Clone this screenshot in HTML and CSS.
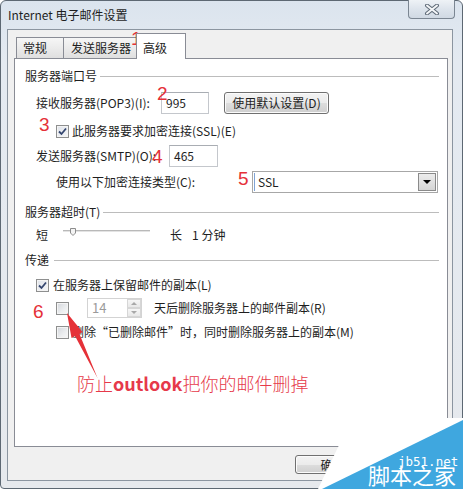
FILE: index.html
```html
<!DOCTYPE html>
<html lang="zh-CN">
<head>
  <meta charset="UTF-8" />
  <title>Internet 电子邮件设置</title>
  <link rel="stylesheet" href="styles.css">
</head>
<body>
  <div class="window">
    <div class="titlebar">
      <span class="title">Internet 电子邮件设置</span>
      <span class="close">
        <svg width="16" height="11" viewBox="0 0 16 11">
          <path d="M3 1.5 L13 9.5 M13 1.5 L3 9.5" stroke="#5f6b78" stroke-width="4" stroke-linecap="round"/>
          <path d="M3 1.5 L13 9.5 M13 1.5 L3 9.5" stroke="#f4f6f8" stroke-width="2" stroke-linecap="round"/>
        </svg>
      </span>
    </div>

    <div class="client">
      <div class="tabs">
        <span class="tab tab-general">常规</span>
        <span class="tab tab-send">发送服务器</span>
        <span class="tab tab-adv active">高级</span>
      </div>

      <div class="panel">
        <div class="group-title">服务器端口号</div>

        <div class="row row-pop">
          <span class="label lbl-pop">接收服务器(POP3)(I):</span>
          <span class="text-input in-pop">995</span>
          <span class="win-btn btn-default">使用默认设置(D)</span>
        </div>

        <div class="row row-check row-ssl">
          <span class="check checked">
            <svg width="11" height="11" viewBox="0 0 11 11"><path d="M2 5.5 L4.5 8 L9 2.5" fill="none" stroke="#34466f" stroke-width="1.8"/></svg>
          </span>
          <span>此服务器要求加密连接(SSL)(E)</span>
        </div>

        <div class="row row-smtp">
          <span class="label lbl-smtp">发送服务器(SMTP)(O):</span>
          <span class="text-input in-smtp">465</span>
        </div>

        <div class="row row-enc">
          <span class="label lbl-enc">使用以下加密连接类型(C):</span>
          <span class="select">
            <span class="select-text">SSL</span>
            <span class="select-arrow"></span>
          </span>
        </div>

        <div class="group-title gt-timeout">服务器超时(T)</div>

        <div class="row row-slider">
          <span>短</span>
          <svg class="slider" width="87" height="16" viewBox="0 0 87 16">
            <rect x="0" y="3" width="87" height="2" fill="#e3e3e3"/>
            <rect x="0" y="3" width="87" height="1" fill="#b9b9b9"/>
            <path d="M7.5 1.5 H12.5 V6 L10 8.5 L7.5 6 Z" fill="#f4f4f4" stroke="#8d8d8d"/>
          </svg>
          <span class="long">长</span>
          <span>1 分钟</span>
        </div>

        <div class="group-title gt-deliver">传递</div>

        <div class="row row-keep">
          <span class="check checked">
            <svg width="11" height="11" viewBox="0 0 11 11"><path d="M2 5.5 L4.5 8 L9 2.5" fill="none" stroke="#34466f" stroke-width="1.8"/></svg>
          </span>
          <span>在服务器上保留邮件的副本(L)</span>
        </div>

        <div class="row row-check row-days">
          <span class="check"></span>
          <span class="spin">
            <span class="spin-text">14</span>
            <span class="spin-btns">
              <span class="spin-up"></span>
              <span class="spin-down"></span>
            </span>
          </span>
          <span class="days-text">天后删除服务器上的邮件副本(R)</span>
        </div>

        <div class="row row-check row-del">
          <span class="check"></span>
          <span>删除“已删除邮件”时，同时删除服务器上的副本(M)</span>
        </div>
      </div>

      <div class="bottom">
        <span class="win-btn btn-ok">确定</span>
      </div>
    </div>
  </div>

  <!-- annotations drawn over the screenshot -->
  <span class="mark mark-1">1</span>
  <span class="mark mark-2">2</span>
  <span class="mark mark-3">3</span>
  <span class="mark mark-4">4</span>
  <span class="mark mark-5">5</span>
  <span class="mark mark-6">6</span>

  <svg class="arrow" width="463" height="489" viewBox="0 0 463 489">
    <polygon points="67,313 82.5,332 79.5,334 97.5,378 75,336 71.5,338" fill="#e53138"/>
  </svg>

  <div class="note">防止<b>outlook</b>把你的邮件删掉</div>

  <svg class="watermark" width="183" height="89" viewBox="0 0 183 89">
    <polygon points="38,89 72,18 183,18 183,89" fill="#ffffff"/>
    <polygon points="42,89 183,20 183,89" fill="#3fa7df"/>
    <text x="118" y="66" class="wm-url">jb51.net</text>
    <text x="88" y="84" class="wm-name">脚本之家</text>
  </svg>
</body>
</html>
```

FILE: styles.css
```css
* {
  box-sizing: border-box;
}

body {
  position: relative;
  margin: 0;
  width: 463px;
  height: 489px;
  overflow: hidden;
  font-family: "Noto Sans CJK SC", sans-serif;
  font-size: 12px;
  color: #1e1e1e;
  background: #fff;
}

.window {
  width: 463px;
  height: 489px;
  border: 1px solid #5d6873;
  border-radius: 6px 6px 4px 4px;
  background: linear-gradient(180deg, #dbe4ee 0, #e4eaf1 60px, #e6e9ed 100%);
}

.titlebar {
  display: flex;
  height: 28px;
  padding-left: 7px;
}

.title {
  margin-top: 6px;
  line-height: 16px;
}

.close {
  display: flex;
  align-items: center;
  justify-content: center;
  margin: -1px 7px 0 auto;
  width: 47px;
  height: 19px;
  border: 1px solid #7b8692;
  border-top: none;
  border-radius: 0 0 4px 4px;
  background: linear-gradient(180deg, #eef2f6 0, #dde4ec 50%, #d0d9e3 100%);
}

.client {
  margin-left: 6px;
  width: 446px;
  height: 452px;
  padding: 0 4px 0 6px;
  border: 1px solid #8b95a0;
  background: #f0f0f0;
}

/* tabs */
.tabs {
  display: flex;
  align-items: flex-end;
  height: 28px;
  padding-left: 2px;
}

.tab {
  height: 21px;
  padding: 2px 0 0 6px;
  line-height: 16px;
  border: 1px solid #898c95;
  border-bottom: none;
  background: linear-gradient(180deg, #f6f6f6 0, #ebebeb 50%, #dfdfdf 100%);
  white-space: nowrap;
}

.tab-general {
  width: 48px;
}

.tab-send {
  width: 74px;
  margin-left: -1px;
  padding-left: 7px;
}

.tab-adv {
  width: 50px;
  margin-left: -1px;
}

.tab.active {
  position: relative;
  z-index: 1;
  height: 26px;
  margin-bottom: -1px;
  padding-top: 6px;
  background: #fff;
}

.panel {
  width: 434px;
  height: 389px;
  padding: 9px 8px 0 10px;
  border: 1px solid #898c95;
  background: #fff;
}

.group-title {
  display: flex;
  align-items: center;
  height: 16px;
  line-height: 16px;
  white-space: nowrap;
}

.group-title::after {
  content: "";
  flex: 1;
  margin-left: 3px;
  border-top: 1px solid #bcbcbc;
}

.gt-timeout {
  margin-top: 11px;
}

.gt-deliver {
  margin-top: 9px;
}

.gt-deliver::after {
  margin-left: 5px;
}

.row {
  display: flex;
  align-items: center;
  padding-left: 11px;
  line-height: 16px;
  white-space: nowrap;
}

.row-check {
  padding-left: 31px;
}

.row-pop {
  margin-top: 8px;
  height: 22px;
}

.lbl-pop {
  width: 125px;
}

.text-input {
  height: 22px;
  padding-left: 4px;
  line-height: 20px;
  border: 1px solid #c4c7cc;
  border-top-color: #a9adb3;
  background: #fff;
}

.in-pop {
  width: 48px;
}

.win-btn {
  height: 22px;
  line-height: 20px;
  text-align: center;
  border: 1px solid #707070;
  border-radius: 3px;
  background: linear-gradient(180deg, #f3f3f3 0, #ebebeb 50%, #dddddd 51%, #cfcfcf 100%);
  box-shadow: inset 0 0 0 1px #fbfbfb;
}

.btn-default {
  width: 105px;
  margin-left: 15px;
}

.row-ssl {
  margin-top: 8px;
  height: 18px;
}

.check {
  display: flex;
  align-items: center;
  justify-content: center;
  flex: none;
  width: 13px;
  height: 13px;
  margin-right: 3px;
  border: 1px solid #8e8f8f;
  background: linear-gradient(135deg, #d3d6db 0, #eceef0 60%, #f7f7f7 100%);
  box-shadow: inset 0 0 0 1px #f4f4f4;
}

.check.checked {
  background: linear-gradient(135deg, #dfe3ea 0, #f5f6f8 100%);
}

.row-smtp {
  margin-top: 5px;
  height: 22px;
}

.lbl-smtp {
  width: 133px;
}

.in-smtp {
  width: 49px;
}

.row-enc {
  margin-top: 4px;
  height: 22px;
  padding-left: 31px;
}

.lbl-enc {
  width: 196px;
}

.select {
  display: flex;
  align-items: center;
  width: 186px;
  height: 22px;
  padding: 1px;
  border: 1px solid #a7a7a7;
  background: #fff;
}

.select-text {
  flex: 1;
  height: 18px;
  padding-left: 3px;
  line-height: 18px;
  border-left: 1px solid #7fa4d6;
}

.select-arrow {
  position: relative;
  width: 18px;
  height: 18px;
  border: 1px solid #8a8a8a;
  background: linear-gradient(180deg, #ececec 0, #d4d4d4 100%);
}

.select-arrow::after {
  content: "";
  position: absolute;
  left: 4px;
  top: 6px;
  border-left: 4px solid transparent;
  border-right: 4px solid transparent;
  border-top: 4px solid #000;
}

.row-slider {
  margin-top: 7px;
  height: 16px;
}

.slider {
  margin-left: 15px;
}

.long {
  margin-left: 20px;
  margin-right: 10px;
}

.row-keep {
  margin-top: 9px;
  height: 16px;
}

.row-keep .check {
  margin-right: 4px;
}

.row-days {
  margin-top: 5px;
  height: 20px;
}

.spin {
  display: flex;
  width: 55px;
  height: 20px;
  margin-left: 15px;
  border: 1px solid #d3d3d3;
  background: #fff;
}

.spin-text {
  flex: 1;
  padding-left: 4px;
  line-height: 18px;
  color: #9a9a9a;
  font-size: 13px;
}

.spin-btns {
  display: flex;
  flex-direction: column;
  width: 14px;
}

.spin-up,
.spin-down {
  position: relative;
  flex: 1;
  border: 1px solid #d6d6d6;
  background: linear-gradient(180deg, #f6f6f6 0, #e8e8e8 100%);
}

.spin-up::after,
.spin-down::after {
  content: "";
  position: absolute;
  left: 3px;
  top: 2px;
  border-left: 3px solid transparent;
  border-right: 3px solid transparent;
}

.spin-up::after {
  border-bottom: 3px solid #a8a8a8;
}

.spin-down::after {
  border-top: 3px solid #a8a8a8;
}

.days-text {
  margin-left: 12px;
}

.row-del {
  margin-top: 6px;
  height: 16px;
}

.bottom {
  padding: 8px 0 0 281px;
}

.btn-ok {
  display: block;
  width: 75px;
  height: 19px;
  line-height: 17px;
}

/* red annotations */
.mark {
  position: absolute;
  font-family: "Liberation Sans", sans-serif;
  font-size: 19px;
  line-height: 19px;
  color: #e53138;
}

.mark-1 { left: 131px; top: 29px; }
.mark-2 { left: 157px; top: 84px; }
.mark-3 { left: 39px; top: 115px; }
.mark-4 { left: 152px; top: 147px; }
.mark-5 { left: 238px; top: 169px; }
.mark-6 { left: 33px; top: 302px; }

.arrow {
  position: absolute;
  left: 0;
  top: 0;
}

.note {
  position: absolute;
  left: 77px;
  top: 373px;
  font-size: 18px;
  font-weight: 300;
  line-height: 20px;
  color: #e6394a;
  white-space: nowrap;
}

.note b {
  font-weight: 600;
}

.watermark {
  position: absolute;
  left: 280px;
  top: 400px;
}

.wm-url {
  font-family: "DejaVu Sans Mono", monospace;
  font-size: 12.5px;
  fill: #fff;
}

.wm-name {
  font-family: "Noto Sans CJK SC", sans-serif;
  font-size: 22px;
  fill: #fff;
}
```
